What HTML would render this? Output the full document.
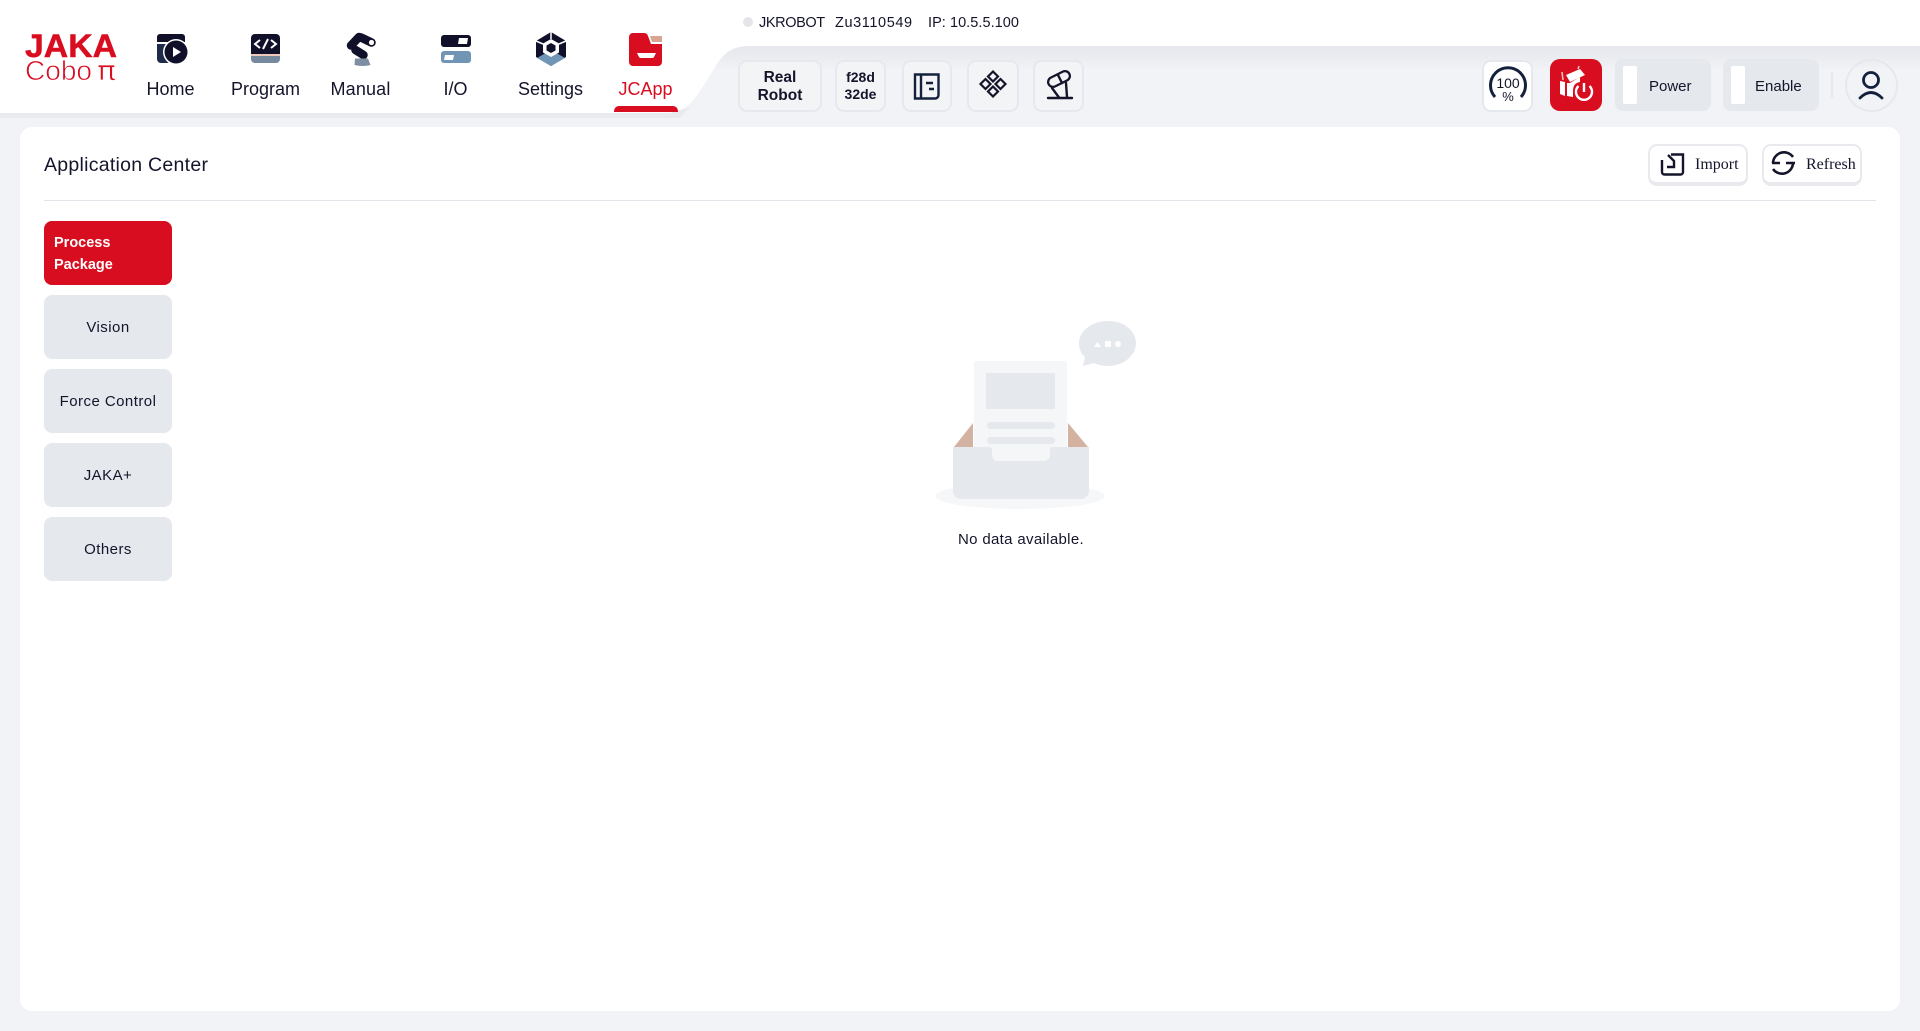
<!DOCTYPE html>
<html lang="en"><head><meta charset="utf-8"><title>JAKA Application Center</title>
<style>
html,body{margin:0;padding:0}
body{width:1920px;height:1031px;overflow:hidden;position:relative;background:#f2f3f6;font-family:"Liberation Sans",sans-serif;color:#14142b}
.a{position:absolute}
.nav{position:absolute;top:76px;width:95px;text-align:center;font-size:18px;line-height:26px}
.card{position:absolute;left:20px;top:127px;width:1880px;height:884px;background:#fff;border-radius:12px}
.side{position:absolute;left:44px;width:128px;height:62px;padding-top:2px;border-radius:8px;background:#e5e8ed;font-size:15px;line-height:22px;letter-spacing:.45px;display:flex;align-items:center;justify-content:center;text-align:center}
.side.on{background:#d90d20;color:#fff;font-weight:bold;font-size:14.5px;letter-spacing:0;justify-content:flex-start;text-align:left;padding-left:10px;width:118px}
.tb{position:absolute;top:60px;height:48px;border:2px solid #e5e8ed;border-radius:9px;background:#f3f4f6;box-sizing:content-box;display:flex;align-items:center;justify-content:center;text-align:center;font-weight:bold}
.sw{position:absolute;top:59px;width:96px;height:52px;border-radius:8px;background:#e5e8ed;font-size:15px;line-height:56px}
.sw i{position:absolute;left:8px;top:7px;width:14px;height:38px;background:#fff;border-radius:2px}
.sw span{position:absolute;left:34px;top:0}
.btn{position:absolute;top:144px;width:96px;height:36px;border:2px solid #e8eaee;border-bottom-width:4px;border-radius:9px;background:#fff;font-family:"Liberation Serif",serif;font-size:16px;line-height:38px}
.btn span{position:absolute;top:0}
</style></head>
<body>
<svg class="a" style="left:0;top:0" width="1920" height="127" viewBox="0 0 1920 127">
<defs><linearGradient id="g" x1="0" y1="0" x2="0" y2="1"><stop offset="0" stop-color="#e5e8ed"/><stop offset=".12" stop-color="#e9ebef"/><stop offset=".3" stop-color="#f2f3f6"/></linearGradient></defs>
<rect width="1920" height="127" fill="#fff"/>
<path d="M0 113H670C690 113 700 90 712 72C722 56 728 46 750 46H1920V127H0Z" fill="url(#g)"/>
<path d="M0 113H670L690 107L680 118H0Z" fill="#e8eaee"/>
</svg>

<div class="nav" style="left:123px">Home</div>
<div class="nav" style="left:218px">Program</div>
<div class="nav" style="left:313px;letter-spacing:.15px">Manual</div>
<div class="nav" style="left:408px">I/O</div>
<div class="nav" style="left:503px">Settings</div>
<div class="nav" style="left:598px;color:#d90d20">JCApp</div>
<div class="a" style="left:614px;top:106px;width:64px;height:6px;background:#d90d20;border-radius:5px 5px 0 0"></div>

<div class="a" style="left:743px;top:17px;width:10px;height:10px;border-radius:50%;background:#e3e5e9"></div>
<div class="a" style="left:759px;top:14px;font-size:14.5px;line-height:18px;letter-spacing:-.4px;white-space:nowrap">JKROBOT</div>
<div class="a" style="left:835px;top:14px;font-size:14.5px;line-height:18px;letter-spacing:.6px;white-space:nowrap">Zu3110549</div>
<div class="a" style="left:928px;top:14px;font-size:14.5px;line-height:18px;letter-spacing:.05px;white-space:nowrap">IP: 10.5.5.100</div>

<div class="tb" style="left:738px;width:80px;font-size:15.500px;line-height:18px;padding-top:0"><span style="position:relative;top:1px">Real<br>Robot</span></div>
<div class="tb" style="left:835px;width:47px;font-size:14px;line-height:17px">f28d<br>32de</div>
<div class="tb" style="left:902px;width:46px"></div>
<div class="tb" style="left:967px;width:48px"></div>
<div class="tb" style="left:1033px;width:47px"></div>

<div class="tb" style="left:1482px;width:47px;background:#fff"></div>
<div class="a" style="left:1550px;top:59px;width:52px;height:52px;border-radius:10px;background:#d90d20"></div>
<div class="sw" style="left:1615px"><i></i><span>Power</span></div>
<div class="sw" style="left:1723px"><i></i><span style="left:32px">Enable</span></div>
<div class="a" style="left:1831px;top:72px;width:2px;height:26px;background:#e5e8ed"></div>
<div class="a" style="left:1845px;top:59px;width:49px;height:49px;border:2px solid #e5e8ed;border-radius:50%"></div>

<div class="card"></div>
<div class="a" style="left:44px;top:150px;font-size:19.5px;line-height:30px;letter-spacing:.27px;white-space:nowrap">Application Center</div>
<div class="a" style="left:44px;top:200px;width:1832px;height:1px;background:#e3e5ea"></div>
<div class="btn" style="left:1648px"><span style="left:45px">Import</span></div>
<div class="btn" style="left:1762px"><span style="left:42px">Refresh</span></div>

<div class="side on" style="top:221px">Process<br>Package</div>
<div class="side" style="top:295px">Vision</div>
<div class="side" style="top:369px">Force Control</div>
<div class="side" style="top:443px">JAKA+</div>
<div class="side" style="top:517px">Others</div>

<div class="a" style="left:921px;top:530px;width:200px;text-align:center;font-size:15px;line-height:20px;letter-spacing:.33px">No data available.</div>

<svg class="a" style="left:0;top:0;pointer-events:none" width="1920" height="1031" viewBox="0 0 1920 1031" fill="none">
<!-- logo -->
<text x="25" y="57" font-family="Liberation Sans" font-weight="bold" font-size="32" fill="#d90d20" stroke="#d90d20" stroke-width=".5" textLength="92" lengthAdjust="spacingAndGlyphs">JAKA</text>
<text x="25" y="80" font-family="Liberation Sans" font-size="28" fill="#d90d20" stroke="#fff" stroke-width=".7" textLength="67" lengthAdjust="spacingAndGlyphs">Cobo</text>
<text x="97" y="80" font-family="DejaVu Sans" font-size="28" fill="#d90d20" stroke="#fff" stroke-width=".7" textLength="19" lengthAdjust="spacingAndGlyphs">π</text>

<!-- home -->
<path d="M157 37a3 3 0 0 1 3-3h22a3 3 0 0 1 3 3v5h-28z" fill="#10102a"/>
<path d="M157 44h12a13 13 0 0 0-.5 19H161a4 4 0 0 1-4-4z" fill="#1d2a4a"/>
<circle cx="176" cy="52" r="13" fill="#fff"/><circle cx="176" cy="52" r="11.5" fill="#10102a"/>
<path d="M173 47l8 5-8 5z" fill="#fff"/>

<!-- program -->
<path d="M251 38a4 4 0 0 1 4-4h21a4 4 0 0 1 4 4v16h-29z" fill="#10102a"/>
<path d="M251 54h29v2h-29z" fill="#eec9bb"/>
<path d="M251 56h29v3a4 4 0 0 1-4 4h-21a4 4 0 0 1-4-4z" fill="#76899f"/>
<path d="M260 40l-5 4 5 4M271 40l5 4-5 4M268 39l-5 10" stroke="#fff" stroke-width="2"/>

<!-- manual -->
<path d="M361 37.500l10.500 5" stroke="#10102a" stroke-width="8.500" stroke-linecap="round"/>
<path d="M359 37l-8 8.500" stroke="#10102a" stroke-width="8.500" stroke-linecap="round"/>
<path d="M355.500 50l8 5" stroke="#10102a" stroke-width="8.500" stroke-linecap="round"/>
<circle cx="371.500" cy="42.500" r="2.600" fill="#fff"/>
<path d="M355 58.500l13 0 2.500 6.500q-8 2-16 0z" fill="#7f8fa3"/>

<!-- io -->
<rect x="441" y="35" width="30" height="12" rx="3" fill="#10102a"/><path d="M459 38h9l-1 6h-9z" fill="#fff"/>
<rect x="441" y="51" width="30" height="12" rx="3" fill="#7195b5"/><path d="M445 55h9l-1 5h-9z" fill="#fff"/>

<!-- settings -->
<path d="M551 32l15 9v16l-15 9-15-9V41z" fill="#10102a"/>
<path d="M537 58l14-8 14 8-14 8z" fill="#7195b5"/>
<path d="M551 39l8 4.500v9l-8 4.500-8-4.500v-9z" fill="#fff"/>
<path d="M551 43l4.500 2.500v5l-4.500 2.500-4.500-2.500v-5z" fill="#10102a"/>
<path d="M551 32v7M536 41l7 3M566 41l-7 3" stroke="#fff" stroke-width="1.500"/>

<!-- jcapp -->
<path d="M629 37a4 4 0 0 1 4-4h11a4 4 0 0 1 4 3l3 8h11v18a4 4 0 0 1-4 4h-25a4 4 0 0 1-4-4z" fill="#d90d20"/>
<path d="M650 36h12v6h-10z" fill="#d8a594"/>
<path d="M637 53h19l-2 4a2 2 0 0 1-2 1h-11a2 2 0 0 1-2-1z" fill="#fff"/>

<!-- book -->
<path d="M915 74.500h23.500v20.500a3.500 3.500 0 0 1-3.500 3.500h-20zM921 74.500v24M926 83h7M929 89h5" stroke="#14213d" stroke-width="2.400"/>

<!-- diamonds -->
<g stroke="#14142b" stroke-width="2.200"><path d="M993 71.500l5 5-5 5-5-5zM985.500 79l5 5-5 5-5-5zM1000.500 79l5 5-5 5-5-5zM993 86.500l5 5-5 5-5-5z"/></g>

<!-- robot arm -->
<path d="M1053 82l12-6" stroke="#14142b" stroke-width="12" stroke-linecap="round"/>
<path d="M1053 82l12-6" stroke="#f3f4f6" stroke-width="7.500" stroke-linecap="round"/>
<g stroke="#14142b" stroke-width="2.400" stroke-linecap="round">
<path d="M1048 98h24"/>
<path d="M1058 75l4 8M1052 88l7 9.500M1066 83l1 14"/>
</g>

<!-- gauge -->
<path d="M1495 97a17.500 17.500 0 1 1 26 0" stroke="#14213d" stroke-width="3"/>
<text x="1508" y="88" text-anchor="middle" font-family="Liberation Sans" font-size="14" fill="#14142b">100</text>
<text x="1508" y="101" text-anchor="middle" font-family="Liberation Sans" font-size="13" fill="#14142b">%</text>

<!-- red power -->
<path d="M1566 75l14-6 5 6-15 7z" fill="#fff"/>
<path d="M1560 81l5 1v14l-5-2z" fill="#fff"/>
<path d="M1567 83l3 0 10-6v5q-7 1-7 9v6l-6-1z" fill="#fff"/>
<path d="M1563 80l-1-8M1578 69l1-3" stroke="#f0c8bc" stroke-width="1.500"/>
<circle cx="1584" cy="92" r="9.500" fill="#d90d20"/>
<path d="M1578.500 86a8 8 0 1 0 11 0" stroke="#fff" stroke-width="2.400"/>
<path d="M1584 83v9" stroke="#fff" stroke-width="2.400"/>

<!-- person -->
<circle cx="1871" cy="80" r="7.500" stroke="#14213d" stroke-width="2.800"/>
<path d="M1860 98q11-11 22 0" stroke="#14213d" stroke-width="2.800" stroke-linecap="round"/>

<!-- import -->
<path d="M1662 160v12a2.500 2.500 0 0 0 2.500 2.500h16a2.500 2.500 0 0 0 2.500-2.500v-17.500h-12M1668 155l6 6v6h-7" stroke="#14142b" stroke-width="2.400"/>

<!-- refresh -->
<path d="M1773 163a11 11 0 0 1 20-6M1772 163h8M1793 163a11 11 0 0 1-20 6M1786 163h9" stroke="#14142b" stroke-width="2.600"/>

<!-- empty illustration -->
<ellipse cx="1020" cy="496" rx="85" ry="13" fill="#f6f7f8"/>
<path d="M954 447l19-24v24zM1068 423l20 24h-20z" fill="#d4b2a2"/>
<path d="M974 364a3 3 0 0 1 3-3h87a3 3 0 0 1 3 3v97h-93z" fill="#f5f6f7"/>
<rect x="986" y="373" width="69" height="36" rx="1" fill="#e5e8ed"/>
<rect x="987" y="422" width="68" height="7" rx="3.500" fill="#e5e8ed"/>
<rect x="987" y="437" width="68" height="7" rx="3.500" fill="#e5e8ed"/>
<path d="M953 447h36a3 3 0 0 1 3 3v5a6 6 0 0 0 6 6h46a6 6 0 0 0 6-6v-5a3 3 0 0 1 3-3h36v44a8 8 0 0 1-8 8H961a8 8 0 0 1-8-8z" fill="#e5e8ed"/>
<path d="M1085 357q-6-5-6-14c0-12 13-22 29-22s28 10 28 22-12 23-28 23q-8 0-14-3l-11 3z" fill="#e5e8ed"/>
<path d="M1094 347l3.500-5 3.500 5z" fill="#fff"/><rect x="1105" y="341" width="6" height="6" fill="#fff"/><circle cx="1118" cy="344" r="3" fill="#fff"/>
</svg>
</body></html>
